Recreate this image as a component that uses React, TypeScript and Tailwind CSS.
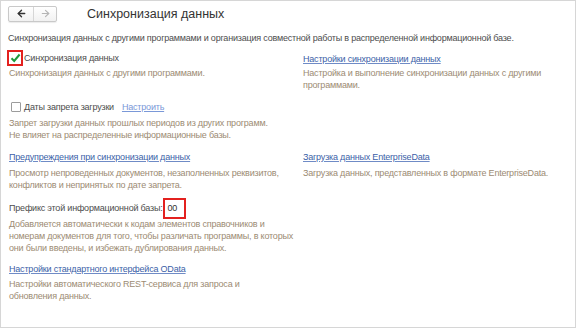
import { ArrowLeft, ArrowRight } from "lucide-react";

function Link({ children }: { children: React.ReactNode }) {
    return <span className="text-[#3c5fa8] underline underline-offset-1 decoration-[#6f8bc6]">{children}</span>;
}

function Note({ children, className = "" }: { children: React.ReactNode; className?: string }) {
    return <p className={`text-[#9c8b73] whitespace-nowrap ${className}`}>{children}</p>;
}

export default function App() {
    return (
        <div className="font-['Liberation_Sans',Arial,sans-serif] w-[576px] h-[328px] bg-white border border-[#d6d6d6] text-[9px] leading-[12px] tracking-[-0.2px] text-[#4d4d4d] overflow-hidden">
            {/* Header */}
            <div className="flex items-center h-[25px] pl-[7px]">
                <div className="flex h-[16px] border border-[#c9c9c9] rounded-[2px] bg-gradient-to-b from-white to-[#f1f1f1] shadow-[0_1px_1px_rgba(0,0,0,0.08)]">
                    <div className="w-[25px] flex items-center justify-center border-r border-[#d6d6d6]">
                        <ArrowLeft size={11} strokeWidth={3} className="text-[#333]" />
                    </div>
                    <div className="w-[22px] flex items-center justify-center">
                        <ArrowRight size={11} strokeWidth={2.5} className="text-[#b5b5b5]" />
                    </div>
                </div>
                <h1 className="ml-[30px] text-[12.5px] tracking-normal text-[#333]">Синхронизация данных</h1>
            </div>

            <p className="mt-[6px] px-[7px]">
                Синхронизация данных с другими программами и организация совместной работы в распределенной информационной базе.
            </p>

            <div className="grid grid-cols-[296px_1fr] mt-[6px] pl-[6px] pr-[8px]">
                {/* Row 1 */}
                <div>
                    <div className="flex items-center h-[16px]">
                        <div className="w-[16px] h-[16px] border-2 border-[#e3211f] flex items-center justify-center bg-white">
                            <svg width="11" height="10" viewBox="0 0 11 10">
                                <path d="M1.5 5.2 L4.2 8 L9.6 1.5" fill="none" stroke="#1e9a3c" strokeWidth="2" />
                            </svg>
                        </div>
                        <span className="ml-[1px]">Синхронизация данных</span>
                    </div>
                    <Note className="mt-[1px] pl-[2px]">Синхронизация данных с другими программами.</Note>
                </div>
                <div className="pt-[3px]">
                    <Link>Настройки синхронизации данных</Link>
                    <Note className="mt-[2px]">
                        Настройка и выполнение синхронизации данных с другими
                        <br />
                        программами.
                    </Note>
                </div>

                {/* Row 2 */}
                <div className="mt-[9px] pl-[2px]">
                    <div className="flex items-center h-[14px]">
                        <div className="ml-[2px] w-[10px] h-[10px] border border-[#9c9c9c] rounded-[1px] bg-white" />
                        <span className="ml-[3px]">Даты запрета загрузки</span>
                        <span className="ml-[8px] text-[#7a98d8] underline underline-offset-1">Настроить</span>
                    </div>
                    <Note className="mt-[3px]">
                        Запрет загрузки данных прошлых периодов из других программ.
                        <br />
                        Не влияет на распределенные информационные базы.
                    </Note>
                </div>
                <div />

                {/* Row 3 */}
                <div className="mt-[10px] pl-[2px]">
                    <Link>Предупреждения при синхронизации данных</Link>
                    <Note className="mt-[4px]">
                        Просмотр непроведенных документов, незаполненных реквизитов,
                        <br />
                        конфликтов и непринятых по дате запрета.
                    </Note>
                </div>
                <div className="mt-[10px]">
                    <Link>Загрузка данных EnterpriseData</Link>
                    <Note className="mt-[4px]">Загрузка данных, представленных в формате EnterpriseData.</Note>
                </div>

                {/* Row 4 */}
                <div className="mt-[7px] pl-[2px]">
                    <div className="flex items-center h-[20px]">
                        <span>Префикс этой информационной базы:</span>
                        <div className="w-[23px] h-[21px] border-2 border-[#e3211f] bg-white flex items-center pl-[3px]">
                            <span className="text-[#333]">00</span>
                        </div>
                    </div>
                    <Note>
                        Добавляется автоматически к кодам элементов справочников и
                        <br />
                        номерам документов для того, чтобы различать программы, в которых
                        <br />
                        они были введены, и избежать дублирования данных.
                    </Note>
                </div>
                <div />

                {/* Row 5 */}
                <div className="mt-[9px] pl-[2px]">
                    <Link>Настройки стандартного интерфейса OData</Link>
                    <Note className="mt-[3px]">
                        Настройки автоматического REST-сервиса для запроса и
                        <br />
                        обновления данных.
                    </Note>
                </div>
                <div />
            </div>
        </div>
    );
}
